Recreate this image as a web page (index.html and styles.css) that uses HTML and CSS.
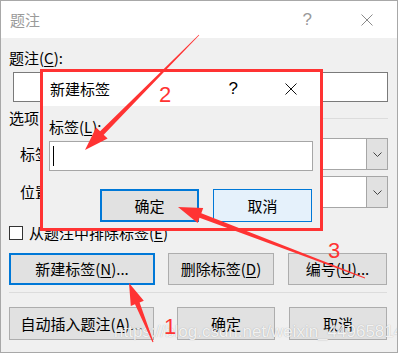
FILE: index.html
```html
<!DOCTYPE html>
<html lang="zh-CN">
<head>
    <meta charset="UTF-8">
    <meta name="viewport" content="width=device-width, initial-scale=1.0">
    <title>题注</title>
    <link rel="stylesheet" href="styles.css">
</head>
<body>
    <div class="dialog">
        <div class="titlebar">
            <span class="title">题注</span>
            <span class="help">?</span>
            <svg class="close" width="12" height="12" viewBox="0 0 12 12"><path d="M0.5 0.5L11.5 11.5M11.5 0.5L0.5 11.5" stroke="#8a8a8a" stroke-width="1"/></svg>
        </div>

        <div class="content">
            <div class="label">题注(<u>C</u>):</div>
            <div class="input wide"></div>

            <div class="group">
                <span>选项</span>
                <span class="rule"></span>
            </div>

            <div class="field">
                <span class="field-label">标签</span>
                <div class="select">
                    <span class="select-btn">
                        <svg width="9" height="5" viewBox="0 0 9 5"><path d="M0.5 0.5L4.5 4.5L8.5 0.5" fill="none" stroke="#444" stroke-width="1"/></svg>
                    </span>
                </div>
            </div>
            <div class="field second">
                <span class="field-label">位置</span>
                <div class="select">
                    <span class="select-btn">
                        <svg width="9" height="5" viewBox="0 0 9 5"><path d="M0.5 0.5L4.5 4.5L8.5 0.5" fill="none" stroke="#444" stroke-width="1"/></svg>
                    </span>
                </div>
            </div>

            <div class="check">
                <span class="box"></span>
                <span>从题注中排除标签(<u>E</u>)</span>
            </div>

            <div class="btn-row">
                <button class="btn focused w146">新建标签(<u>N</u>)...</button>
                <button class="btn w106 gap13">删除标签(<u>D</u>)</button>
                <button class="btn w99 gap14">编号(<u>U</u>)...</button>
            </div>

            <div class="sep"></div>

            <div class="btn-row last">
                <button class="btn w145 tall">自动插入题注(<u>A</u>)...</button>
                <button class="btn w98 gap23 tall">确定</button>
                <button class="btn w98 gap14 tall">取消</button>
            </div>
        </div>

        <!-- 新建标签 -->
        <div class="sub">
            <div class="sub-title">
                <span class="title dark">新建标签</span>
                <span class="help dark">?</span>
                <svg class="close" width="12" height="12" viewBox="0 0 12 12"><path d="M0.5 0.5L11.5 11.5M11.5 0.5L0.5 11.5" stroke="#111" stroke-width="1"/></svg>
            </div>
            <div class="sub-body">
                <div class="label">标签(<u>L</u>):</div>
                <div class="input sub-input"><span class="caret"></span></div>
                <div class="btn-row sub-btns">
                    <button class="btn focused w99">确定</button>
                    <button class="btn hover w99 gap14">取消</button>
                </div>
            </div>
        </div>

        <div class="watermark">https://blog.csdn.net/weixin_44965814</div>

        <svg class="marks" width="398" height="353" viewBox="0 0 398 353">
            <polygon points="153.5,341.8 139.6,302.5 143.8,300.8 129,283 130.8,306 135,304.3 152.5,342.2"/>
            <polygon points="198.8,34.8 100.1,131.2 96.2,127.4 85,150 107.6,138.6 103.7,134.8 199.2,35.2"/>
            <polygon points="365.1,277.6 201.3,213.2 203.2,208 178,207 197.6,223 199.5,217.8 364.9,278.4"/>
        </svg>
        <span class="num n1">1</span>
        <span class="num n2">2</span>
        <span class="num n3">3</span>
    </div>
</body>
</html>
```

FILE: styles.css
```css
body {
    margin: 0;
    font-family: "Noto Sans CJK SC", "Noto Sans", sans-serif;
    font-size: 15px;
    color: #000;
    background: #fff;
}

u {
    text-decoration: underline;
    text-underline-offset: 2px;
}

.dialog {
    position: relative;
    width: 398px;
    height: 353px;
    box-sizing: border-box;
    border: 1px solid #a8a8a8;
    background-color: #f0f0f0;
    overflow: hidden;
}

.titlebar {
    height: 37px;
    background: #fff;
    display: flex;
    align-items: center;
    padding-left: 9px;
}

.title {
    flex: 1;
    color: #9a9a9a;
    line-height: 20px;
}

.title.dark {
    color: #000;
}

.help {
    font-family: "Liberation Sans", Arial, sans-serif;
    font-size: 17px;
    color: #9a9a9a;
    line-height: 20px;
    margin-right: 49px;
}

.help.dark {
    color: #000;
}

.titlebar .close {
    margin-right: 24px;
}

.content {
    padding: 0 9px 0 8px;
}

.label {
    margin-top: 10px;
    line-height: 20px;
    height: 20px;
}

.input {
    background: #fff;
    box-sizing: border-box;
    border: 1px solid #7a7a7a;
    height: 30px;
}

.input.wide {
    margin: 4px 0 0 4px;
}

.group {
    margin-top: 6px;
    height: 20px;
    line-height: 20px;
    display: flex;
    align-items: center;
}

.rule {
    flex: 1;
    height: 1px;
    background: #dcdcdc;
    margin-left: 6px;
}

.field {
    margin-top: 10px;
    height: 32px;
    display: flex;
    align-items: center;
}

.field.second {
    margin-top: 6px;
}

.field-label {
    width: 55px;
    padding-left: 11px;
    line-height: 20px;
}

.select {
    flex: 1;
    height: 32px;
    box-sizing: border-box;
    border: 1px solid #a6a6a6;
    background: #fff;
    display: flex;
    justify-content: flex-end;
}

.select-btn {
    width: 20px;
    background: #e1e1e1;
    border-left: 1px solid #a6a6a6;
    display: flex;
    align-items: center;
    justify-content: center;
}

.check {
    margin-top: 16px;
    height: 18px;
    display: flex;
    align-items: center;
    line-height: 18px;
}

.box {
    width: 14px;
    height: 14px;
    box-sizing: border-box;
    border: 1px solid #333;
    background: #fff;
    margin-right: 6px;
}

.btn-row {
    margin-top: 11px;
    display: flex;
}

.btn-row.last {
    margin-top: 14px;
}

.btn {
    height: 32px;
    box-sizing: border-box;
    border: 1px solid #adadad;
    background-color: #e1e1e1;
    font-family: inherit;
    font-size: 15px;
    color: #000;
    padding: 0;
    line-height: 20px;
}

.btn.tall {
    height: 33px;
}

.btn.focused {
    border: 2px solid #0078d7;
}

.btn.hover {
    background-color: #e5f1fb;
    border-color: #0078d7;
}

.w146 { width: 146px; }
.w145 { width: 145px; }
.w106 { width: 106px; }
.w99 { width: 99px; }
.w98 { width: 98px; }
.gap13 { margin-left: 13px; }
.gap14 { margin-left: 14px; }
.gap23 { margin-left: 23px; }

.sep {
    margin-top: 7px;
    height: 1px;
    background: #dcdcdc;
    margin-right: 1px;
}

/* 新建标签 */
.sub {
    position: absolute;
    left: 39px;
    top: 68px;
    width: 283px;
    height: 162px;
    box-sizing: border-box;
    border: 3px solid #f33;
    background: #f0f0f0;
}

.sub-title {
    height: 34px;
    background: #fff;
    display: flex;
    align-items: center;
    padding-left: 7px;
}

.sub-title .help {
    margin-right: 47px;
}

.sub-title .close {
    margin-right: 23px;
}

.sub-body {
    padding: 0 7px 0 6px;
}

.sub-body .label {
    margin-top: 11px;
}

.sub-input {
    margin-top: 4px;
    border-color: #a6a6a6;
    display: flex;
    align-items: center;
    padding-left: 3px;
}

.caret {
    width: 1px;
    height: 20px;
    background: #000;
}

.sub-btns {
    margin-top: 18px;
    padding-left: 51px;
}

.sub-btns .btn {
    height: 33px;
}

.watermark {
    position: absolute;
    left: 113px;
    top: 321px;
    font-family: "Liberation Sans", Arial, sans-serif;
    font-size: 17px;
    line-height: 20px;
    color: rgba(255, 255, 255, 0.85);
    text-shadow: 0 0 1px rgba(120, 120, 120, 0.6);
    white-space: nowrap;
}

.marks {
    position: absolute;
    left: -1px;
    top: -1px;
    fill: #f33;
}

.num {
    position: absolute;
    font-family: "Liberation Sans", Arial, sans-serif;
    font-size: 22px;
    line-height: 22px;
    color: #f33;
}

.n1 { left: 163px; top: 315px; }
.n2 { left: 158px; top: 83px; }
.n3 { left: 327px; top: 239px; }
```
